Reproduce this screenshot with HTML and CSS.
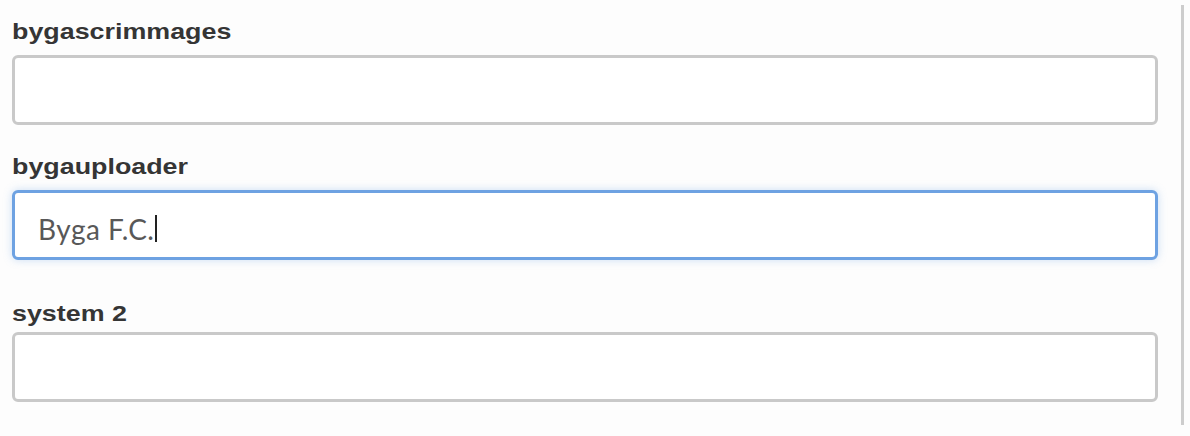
FILE: index.html
```html
<!DOCTYPE html>
<html lang="en">

<head>
    <meta charset="UTF-8">
    <meta name="viewport" content="width=device-width, initial-scale=1.0">
    <title>Team Settings</title>
    <link rel="stylesheet" href="styles.css">
</head>

<body>

    <div class="page">
        <form class="settings-form">
            <div class="field">
                <label class="field-label" for="scrimmages"><span>bygascrimmages</span></label>
                <div class="text-box" id="scrimmages"></div>
            </div>

            <div class="field">
                <label class="field-label" for="uploader"><span>bygauploader</span></label>
                <div class="text-box is-focused" id="uploader">Byga F.C.<span class="caret"></span></div>
            </div>

            <div class="field field-last">
                <label class="field-label" for="system2"><span>system 2</span></label>
                <div class="text-box" id="system2"></div>
            </div>
        </form>

        <div class="side-rule"></div>
    </div>

</body>

</html>
```

FILE: styles.css
```css
    body {
        background: #fdfdfd;
        color: #333;
        font-family: 'Liberation Sans', Arial, sans-serif;
        margin: 0;
        padding: 0;
    }

    .page {
        display: flex;
        padding-top: 5px;
    }

    .settings-form {
        width: 1146px;
        margin-left: 12px;
        padding-top: 14px;
        flex: none;
    }

    .field + .field {
        margin-top: 29px;
    }

    .field-label {
        display: block;
        font-size: 22px;
        font-weight: bold;
        line-height: 26px;
        color: #353535;
        margin-bottom: 10px;
    }

    .field-label span {
        display: inline-block;
        transform: scaleX(1.22);
        transform-origin: left center;
    }

    /* last label sits a bit lower in the panel */
    .field-last {
        margin-top: 41px !important;
    }

    .field-last .field-label {
        margin-bottom: 5px;
    }

    .text-box {
        height: 70px;
        box-sizing: border-box;
        background: #fff;
        border: 3px solid #c9c9c9;
        border-radius: 6px;
        padding: 8px 0 0 23px;
        display: flex;
        align-items: center;
        font-family: Lato, 'Open Sans', sans-serif;
        font-size: 28px;
        letter-spacing: 0.5px;
        color: #585858;
    }

    .text-box.is-focused {
        border-color: #6ea2e2;
        box-shadow: 0 0 8px rgba(110, 162, 226, 0.35);
    }

    .caret {
        display: inline-block;
        width: 2px;
        height: 27px;
        background: #222;
        margin-left: 1px;
        margin-top: -2px;
    }

    .side-rule {
        width: 3px;
        height: 420px;
        background: #cdcdcd;
        margin-left: 23px;
        flex: none;
    }
```
